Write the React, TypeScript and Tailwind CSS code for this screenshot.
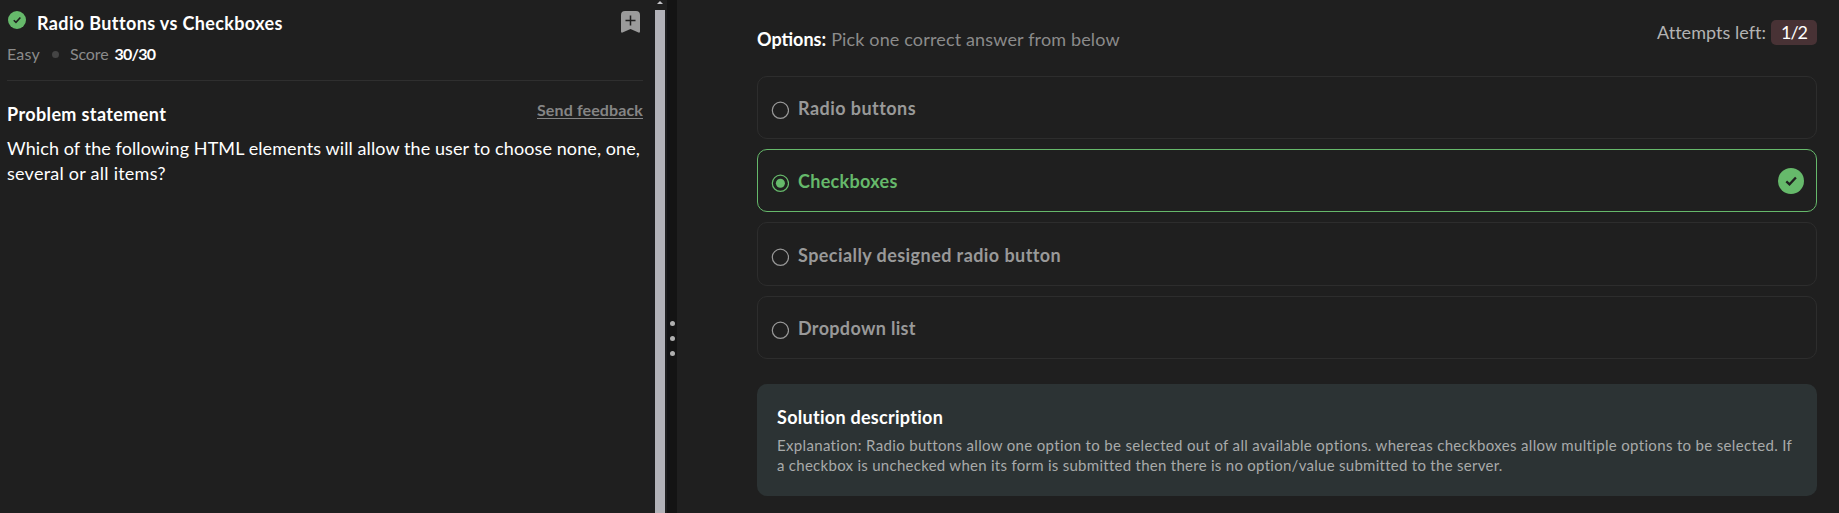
import type { ReactNode } from 'react';

type Option = { label: string; text: string; box: string; selected?: boolean };

const options: Option[] = [
  { label: 'Radio buttons', text: 'tracking-[0.45px]', box: 'h-[63px] pt-[19px]' },
  { label: 'Checkboxes', text: 'tracking-[0.3px]', box: 'h-[63px] pt-[19px]', selected: true },
  { label: 'Specially designed radio button', text: 'tracking-[0.43px]', box: 'h-[64px] pt-[20px]' },
  { label: 'Dropdown list', text: 'tracking-[0.33px]', box: 'h-[63px] pt-[19px]' },
];

function CheckCircle({ className }: { className: string }) {
  return (
    <svg viewBox="0 0 26 26" className={className}>
      <circle cx="13" cy="13" r="13" fill="#66b96b" />
      <path d="M8.3 13.4l3.2 3 6.4-6.9" fill="none" stroke="#1f1f1f" strokeWidth="2.3" />
    </svg>
  );
}

function Bookmark() {
  return (
    <svg viewBox="0 0 19 22" className="mt-[11px] mr-[3px] h-[22px] w-[19px] shrink-0">
      <path d="M4 0h11a4 4 0 0 1 4 4v16.5q0 1.5-1.5 1L9.5 18l-8 3.5q-1.5.5-1.5-1V4a4 4 0 0 1 4-4z" fill="#9b9b9b" />
      <path d="M9.5 4.5v10M4.5 9.5h10" stroke="#1f1f1f" strokeWidth="1.5" />
    </svg>
  );
}

function Radio({ selected }: { selected?: boolean }) {
  return (
    <svg viewBox="0 0 18 18" className={`mt-[5px] h-[18px] w-[18px] shrink-0 ${selected ? 'text-[#66b96b]' : 'text-[#999999]'}`}>
      <circle cx="9.4" cy="9.3" r="8.1" fill="none" stroke="currentColor" strokeWidth="1.2" />
      {selected && <circle cx="9.4" cy="9.3" r="4.5" fill="currentColor" />}
    </svg>
  );
}

function OptionCard({ option }: { option: Option }) {
  const { label, text, box, selected } = option;
  return (
    <div className={`flex items-start rounded-[10px] border pr-[12px] pl-[13px] ${box} ${selected ? 'border-[#66b96b]' : 'border-[#2d2d2d]'}`}>
      <Radio selected={selected} />
      <span className={`ml-[9px] h-6 flex-1 text-[18px] leading-6 font-bold whitespace-nowrap ${text} ${selected ? 'text-[#66b96b]' : 'text-[#999999]'}`}>
        {label}
      </span>
      {selected && <CheckCircle className="-mt-px h-[26px] w-[26px]" />}
    </div>
  );
}

function Heading({ children, className }: { children: ReactNode; className: string }) {
  return <h2 className={`text-[18px] leading-6 font-bold whitespace-nowrap text-white ${className}`}>{children}</h2>;
}

export default function App() {
  return (
    <div className="flex h-[513px] w-full overflow-hidden bg-[#1f1f1f] font-['Lato',sans-serif]">
      <section className="w-[655px] pr-[12px] pl-[7px]">
        <header className="flex h-[81px] justify-between border-b border-[#2f2f2f]">
          <div>
            <div className="flex pt-[11px]">
              <CheckCircle className="ml-[1px] h-[18px] w-[18px]" />
              <h1 className="ml-[11px] text-[18px] leading-6 font-bold tracking-[0.37px] text-white">Radio Buttons vs Checkboxes</h1>
            </div>
            <div className="mt-[9px] flex items-center text-[16px] leading-5 text-[#8b8b8b]">
              <span className="tracking-[0.2px]">Easy</span>
              <span className="ml-[12px] h-[7px] w-[7px] rounded-full bg-[#444444]" />
              <span className="ml-[11px] tracking-[-0.1px]">Score</span>
              <span className="ml-[6px] font-bold tracking-[-0.8px] text-white">30/30</span>
            </div>
          </div>
          <Bookmark />
        </header>
        <div className="flex items-start justify-between pt-[21px]">
          <Heading className="tracking-[0.38px]">Problem statement</Heading>
          <a className="-mt-[2px] h-5 text-[16px] leading-5 font-bold tracking-[0.12px] text-[#858585] underline decoration-1 underline-offset-2">Send feedback</a>
        </div>
        <p className="mt-[10px] text-[18px] leading-[25px] whitespace-nowrap text-white">
          <span className="block tracking-[0.095px]">Which of the following HTML elements will allow the user to choose none, one,</span>
          <span className="block tracking-[0.25px]">several or all items?</span>
        </p>
      </section>

      <div className="flex w-[12px] flex-col">
        <svg viewBox="0 0 10 10" className="h-[10px] w-[10px]">
          <path d="M2 4h6L5 1z" fill="#c4c4c8" />
        </svg>
        <div className="w-[10px] flex-1 bg-[#b2b2b8]" />
      </div>
      <div className="flex w-[10px] flex-col items-center gap-[10px] bg-[#141414] pt-[321px]">
        <span className="h-[5px] w-[5px] rounded-full bg-[#b0b0b0]" />
        <span className="h-[5px] w-[5px] rounded-full bg-[#b0b0b0]" />
        <span className="h-[5px] w-[5px] rounded-full bg-[#b0b0b0]" />
      </div>

      <main className="flex-1 pr-[22px] pl-[80px]">
        <header className="flex h-[76px] justify-between text-[18px]">
          <p className="pt-[27px] leading-6 whitespace-nowrap">
            <span className="font-bold text-white">Options:</span>
            <span className="ml-[5px] tracking-[0.15px] text-[#8b8b8b]">Pick one correct answer from below</span>
          </p>
          <div className="mt-[20px] flex h-[25px] items-center">
            <span className="leading-[25px] tracking-[0.03px] text-[#b3b3b3]">Attempts left:</span>
            <span className="ml-[5px] flex h-[25px] w-[46px] items-center justify-center rounded-[5px] bg-[#483235] tracking-[-1px] text-white">1/2</span>
          </div>
        </header>
        <div className="flex flex-col gap-[10px]">
          {options.map((option) => (
            <OptionCard key={option.label} option={option} />
          ))}
        </div>
        <section className="mt-[25px] h-[112px] rounded-[10px] bg-[#2c3334] px-[20px] pt-[21px]">
          <Heading className="tracking-[0.28px]">Solution description</Heading>
          <p className="mt-[6px] text-[15px] leading-5 whitespace-nowrap text-[#a8aaaa]">
            <span className="block tracking-[0.335px]">Explanation: Radio buttons allow one option to be selected out of all available options. whereas checkboxes allow multiple options to be selected. If</span>
            <span className="block tracking-[0.275px]">a checkbox is unchecked when its form is submitted then there is no option/value submitted to the server.</span>
          </p>
        </section>
      </main>
    </div>
  );
}
